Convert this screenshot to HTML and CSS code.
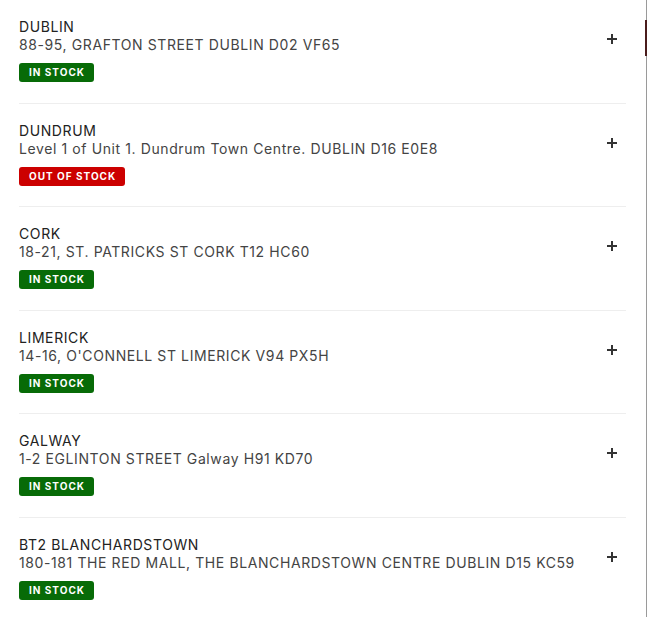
FILE: index.html
```html
<!DOCTYPE html>
<html>
<head>
<meta charset="utf-8">
<link rel="stylesheet" href="styles.css">
</head>
<body>
<div class="page">
  <ul class="stores">
    <li class="store">
      <div class="info">
        <div class="name">DUBLIN</div>
        <div class="addr">88-95, GRAFTON STREET DUBLIN D02 VF65</div>
        <span class="badge in">IN STOCK</span>
      </div>
      <span class="plus"></span>
    </li>
    <li class="store">
      <div class="info">
        <div class="name">DUNDRUM</div>
        <div class="addr">Level 1 of Unit 1. Dundrum Town Centre. DUBLIN D16 E0E8</div>
        <span class="badge out">OUT OF STOCK</span>
      </div>
      <span class="plus"></span>
    </li>
    <li class="store">
      <div class="info">
        <div class="name">CORK</div>
        <div class="addr">18-21, ST. PATRICKS ST CORK T12 HC60</div>
        <span class="badge in">IN STOCK</span>
      </div>
      <span class="plus"></span>
    </li>
    <li class="store">
      <div class="info">
        <div class="name">LIMERICK</div>
        <div class="addr">14-16, O'CONNELL ST LIMERICK V94 PX5H</div>
        <span class="badge in">IN STOCK</span>
      </div>
      <span class="plus"></span>
    </li>
    <li class="store">
      <div class="info">
        <div class="name">GALWAY</div>
        <div class="addr">1-2 EGLINTON STREET Galway H91 KD70</div>
        <span class="badge in">IN STOCK</span>
      </div>
      <span class="plus"></span>
    </li>
    <li class="store">
      <div class="info">
        <div class="name">BT2 BLANCHARDSTOWN</div>
        <div class="addr">180-181 THE RED MALL, THE BLANCHARDSTOWN CENTRE DUBLIN D15 KC59</div>
        <span class="badge in">IN STOCK</span>
      </div>
      <span class="plus"></span>
    </li>
  </ul>
  <div class="track"><div class="thumb"></div></div>
</div>
</body>
</html>
```
FILE: styles.css
```css
html, body {
  margin: 0;
  padding: 0;
  background: #fff;
}
body {
  font-family: Inter, "Liberation Sans", Arial, sans-serif;
  color: #222;
}
.page {
  display: flex;
  height: 617px;
  overflow: hidden;
}
.stores {
  list-style: none;
  margin: 0;
  padding: 0 0 0 19px;
  width: 607px;
}
.store {
  display: flex;
  justify-content: space-between;
  align-items: flex-start;
  padding: 18px 0 20.5px 0;
  border-bottom: 1px solid #eeeeee;
}
.info {
  display: flex;
  flex-direction: column;
  align-items: flex-start;
}
.name {
  font-size: 14px;
  line-height: 18px;
  letter-spacing: 0.6px;
  color: #222;
}
.addr {
  font-size: 14px;
  line-height: 18px;
  letter-spacing: 0.6px;
  color: #444;
}
.badge {
  margin-top: 9px;
  height: 19px;
  line-height: 19px;
  padding: 0 9px 0 10px;
  border-radius: 3px;
  color: #fff;
  font-size: 10px;
  font-weight: 700;
  letter-spacing: 1px;
}
.badge.in { background: #076b07; }
.badge.out { background: #cc0000; }
.plus {
  position: relative;
  width: 10px;
  height: 10px;
  margin: 16px 9px 0 0;
}
.plus::before, .plus::after {
  content: "";
  position: absolute;
  background: #333;
}
.plus::before { left: 0; top: 4px; width: 10px; height: 2px; }
.plus::after { left: 4px; top: 0; width: 2px; height: 10px; }
.track {
  margin-left: auto;
  width: 2px;
  height: 617px;
  box-shadow: inset -1px 0 0 #9a9a9a;
}
.thumb {
  margin-top: 20px;
  height: 36px;
  background: #4a1c1c;
}
```
